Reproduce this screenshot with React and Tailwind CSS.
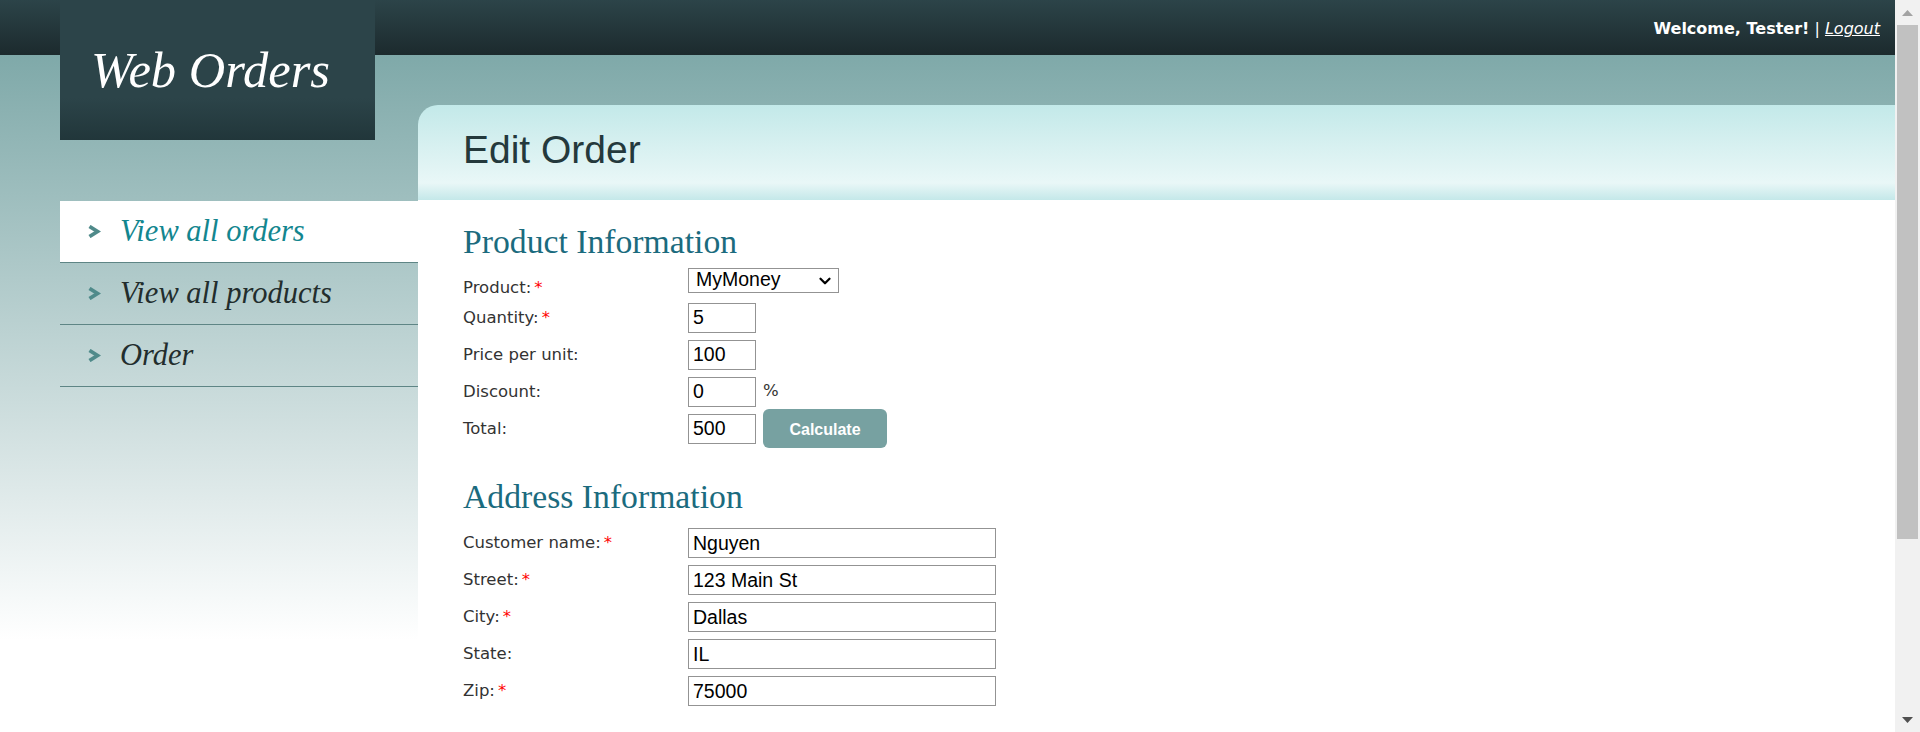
import { ChevronDown } from "lucide-react";

const serif = "font-['Liberation_Serif','Times_New_Roman',serif]";
const sans = "font-['Liberation_Sans',Arial,sans-serif]";
const verdana = "font-['DejaVu_Sans',Verdana,sans-serif]";

const menu = [
    { label: "View all orders", active: true },
    { label: "View all products" },
    { label: "Order" },
];

function Chevron() {
    return (
        <svg width="14" height="13" viewBox="0 0 14 13" aria-hidden>
            <polyline points="2.5,1.5 10.5,6.5 2.5,11.5" fill="none" stroke="#4f8a8a" strokeWidth="3.8" />
        </svg>
    );
}

function Label({ text, required, className = "" }) {
    return (
        <label className={`${verdana} block w-[225px] shrink-0 text-[16.5px] leading-[20px] text-[#333] ${className}`}>
            {text}
            {required && <span className="ml-[3px] text-[#ff0000]">*</span>}
        </label>
    );
}

function TextBox({ value, wide }) {
    return (
        <input
            readOnly
            defaultValue={value}
            className={`${sans} h-[30px] ${wide ? "w-[308px]" : "w-[68px]"} border border-[#939393] bg-white px-[4px] text-[19.5px] text-black outline-none`}
        />
    );
}

function Row({ label, required, children, className = "" }) {
    return (
        <div className={`flex h-[30px] items-center ${className}`}>
            <Label text={label} required={required} />
            {children}
        </div>
    );
}

function Scrollbar() {
    return (
        <div className="flex h-full w-[25px] shrink-0 flex-col bg-[#f1f1f1]">
            <div className="flex h-[25px] items-center justify-center">
                <svg width="11" height="6" viewBox="0 0 11 6" aria-hidden>
                    <polygon points="0,6 5.5,0 11,6" fill="#a3a3a3" />
                </svg>
            </div>
            <div className="mx-[2px] h-[514px] bg-[#c1c1c1]" />
            <div className="flex-1" />
            <div className="flex h-[25px] items-center justify-center">
                <svg width="11" height="6" viewBox="0 0 11 6" aria-hidden>
                    <polygon points="0,0 5.5,6 11,0" fill="#505050" />
                </svg>
            </div>
        </div>
    );
}

export default function App() {
    return (
        <div className="flex h-[732px] w-[1920px] overflow-hidden">
            <div className="flex flex-1 pl-[60px] bg-[linear-gradient(to_bottom,#2c4449_0px,#1c2a2d_55px,#7fa9a9_55px,#ffffff_640px)]">
                {/* left column: logo + navigation */}
                <aside className="w-[358px] shrink-0">
                    <div className="h-[140px] w-[315px] pl-[31px] pt-[45px] bg-[linear-gradient(to_bottom,#2c4449_70%,#21363a)]">
                        <span className={`${serif} text-[50.5px] italic leading-none text-white`}>Web Orders</span>
                    </div>
                    <nav className="mt-[61px]">
                        {menu.map((item) => (
                            <a
                                key={item.label}
                                href="#"
                                className={`flex h-[62px] items-center border-b border-[#5e8585] pl-[27px] ${item.active ? "bg-white text-[#13868f]" : "text-[#222d2d]"}`}
                            >
                                <Chevron />
                                <span className={`${serif} ml-[19px] text-[30.5px] italic leading-none`}>{item.label}</span>
                            </a>
                        ))}
                    </nav>
                </aside>

                {/* right column */}
                <div className="flex flex-1 flex-col">
                    <div className={`${verdana} h-[105px] pr-[15px] pt-[19px] text-right text-[16px] leading-[20px] text-white`}>
                        <b>Welcome, Tester!</b> | <a href="#" className="italic underline">Logout</a>
                    </div>
                    <div className="h-[95px] rounded-tl-[20px] pl-[45px] pt-[25px] bg-[linear-gradient(to_bottom,#c3e9e9_0%,#e9f7f7_82%,#c4e8e9_100%)]">
                        <h1 className={`${sans} text-[39px] leading-none text-[#24393c]`}>Edit Order</h1>
                    </div>
                    <main className="flex-1 bg-white pl-[45px]">
                        <h2 className={`${serif} mt-[25px] text-[33.7px] leading-none text-[#1b6b7e]`}>Product Information</h2>
                        <div className="mt-[9px]">
                            <div className="flex h-[25px] items-start">
                                <Label text="Product:" required className="mt-[10px]" />
                                <div className="relative">
                                    <select
                                        defaultValue="MyMoney"
                                        className={`${sans} h-[25px] w-[151px] appearance-none border border-[#939393] bg-white pl-[7px] text-[19.5px] leading-none text-black outline-none`}
                                    >
                                        <option>MyMoney</option>
                                        <option>FamilyAlbum</option>
                                        <option>ScreenSaver</option>
                                    </select>
                                    <ChevronDown size={18} strokeWidth={3} className="pointer-events-none absolute right-[5px] top-[4px] text-black" />
                                </div>
                            </div>
                            <Row label="Quantity:" required className="mt-[10px]">
                                <TextBox value="5" />
                            </Row>
                            <Row label="Price per unit:" className="mt-[7px]">
                                <TextBox value="100" />
                            </Row>
                            <Row label="Discount:" className="mt-[7px]">
                                <TextBox value="0" />
                                <span className={`${verdana} ml-[7px] text-[16.5px] text-[#333]`}>%</span>
                            </Row>
                            <Row label="Total:" className="mt-[7px]">
                                <TextBox value="500" />
                                <button className={`${sans} ml-[7px] h-[39px] w-[124px] rounded-[6px] bg-[#77a1a1] pt-[2px] text-[16px] font-bold text-white`}>
                                    Calculate
                                </button>
                            </Row>
                        </div>

                        <h2 className={`${serif} mt-[36px] text-[33.7px] leading-none text-[#1b6b7e]`}>Address Information</h2>
                        <div className="mt-[15px] flex flex-col gap-[7px]">
                            <Row label="Customer name:" required>
                                <TextBox value="Nguyen" wide />
                            </Row>
                            <Row label="Street:" required>
                                <TextBox value="123 Main St" wide />
                            </Row>
                            <Row label="City:" required>
                                <TextBox value="Dallas" wide />
                            </Row>
                            <Row label="State:">
                                <TextBox value="IL" wide />
                            </Row>
                            <Row label="Zip:" required>
                                <TextBox value="75000" wide />
                            </Row>
                        </div>
                    </main>
                </div>
            </div>
            <Scrollbar />
        </div>
    );
}
